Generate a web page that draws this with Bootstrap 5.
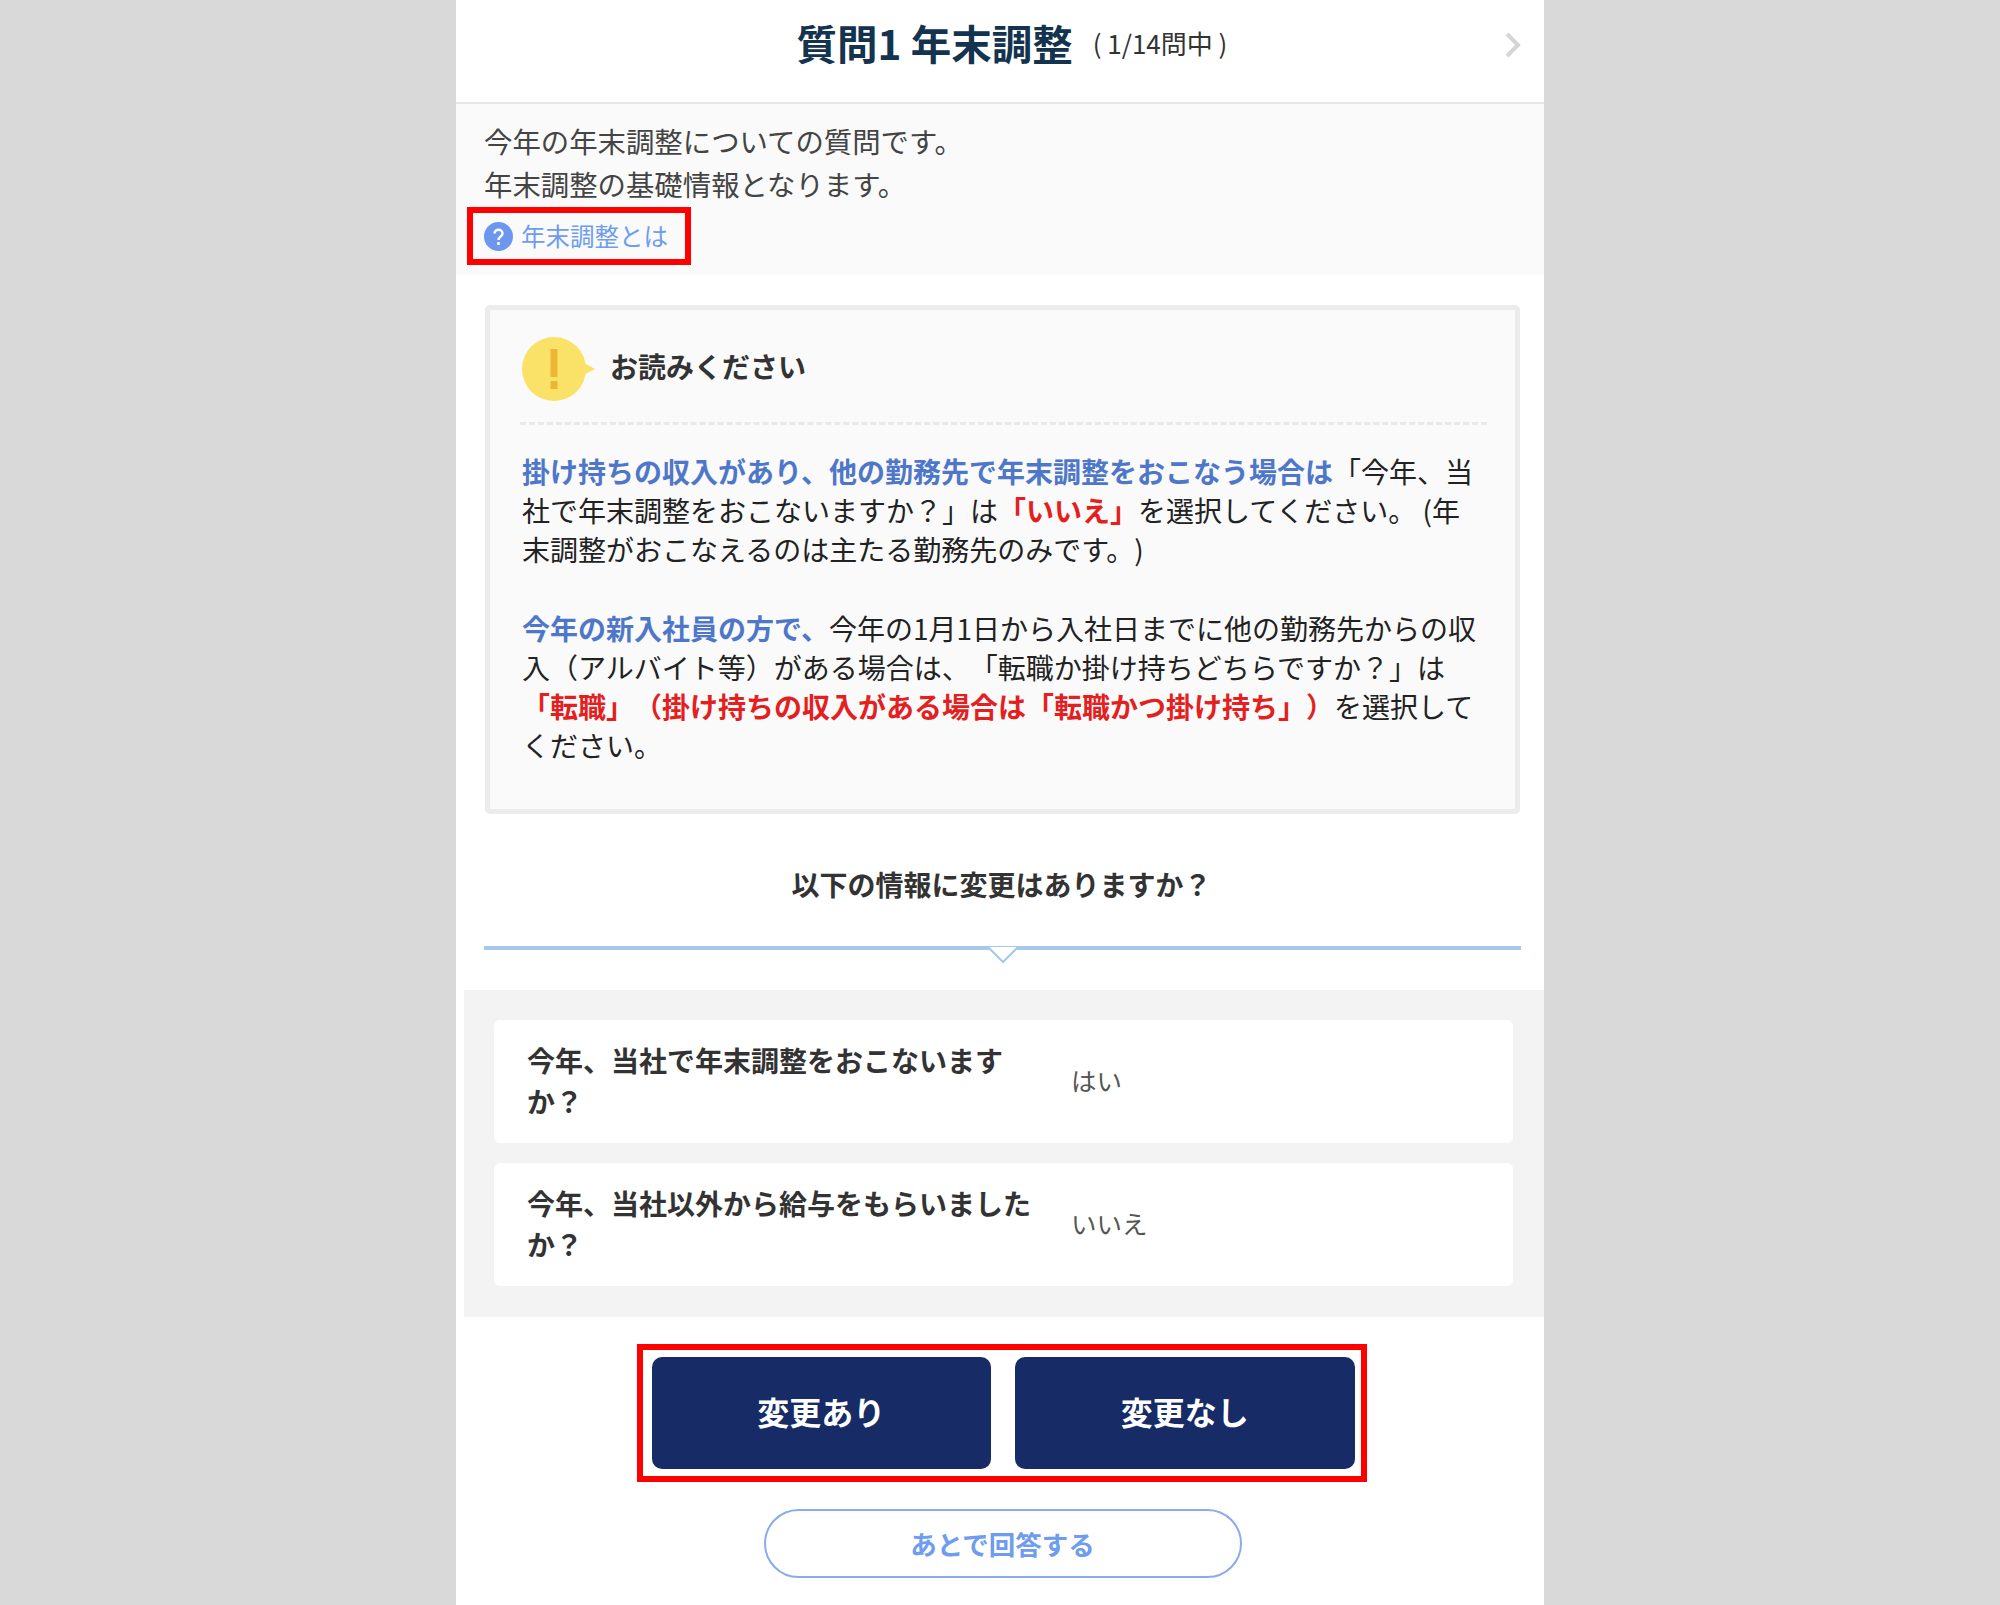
<!DOCTYPE html>
<html lang="ja">
<head>
  <meta charset="UTF-8">
  <title>質問1 年末調整</title>
  <link href="https://cdn.jsdelivr.net/npm/bootstrap@5.3.0/dist/css/bootstrap.min.css" rel="stylesheet">
  <style>
    html, body { height: 100%; }
    body {
      background: #d9d9d9;
      font-family: "Noto Sans CJK JP", "Liberation Sans", sans-serif;
      color: #333;
      overflow: hidden;
      text-spacing-trim: space-all;
    }
    .panel { width: 1088px; min-height: 1605px; background: #fff; }
    .head-bar { height: 104px; border-bottom: 2px solid #e6e6e6; position: relative; padding-left: 24px; }
    .head-title { font-size: 40.5px; font-weight: 700; color: #13334f; line-height: 1; }
    .head-count { font-size: 26px; color: #333; margin-left: 20px; line-height: 1; }
    .head-next { position: absolute; right: 22px; top: 31px; }
    .intro { background: #fafafa; height: 171px; padding: 15px 28px 0; font-size: 28.4px; line-height: 43px; color: #444; }
    .help-box { display: inline-flex; align-items: center; gap: 8px; border: 6px solid #f00; margin: 2px 0 0 -17px; padding: 0 17px 0 11px; height: 58px; font-size: 24.5px; color: #6d9cf0; line-height: 1; vertical-align: top; }
    .notice { margin: 30px 24px 0 29px; height: 509px; border: 5px solid #ececec; border-radius: 5px; background: #fafafa; padding: 21px 28px 0 32px; }
    .notice-head { height: 76px; gap: 14px; font-size: 28px; font-weight: 700; color: #333; }
    .notice-head span { margin-top: -6px; }
    .notice-rule { border-top: 3px dashed #e9e9e9; margin: 15px 0 27px -2px; }
    .notice-text { font-size: 28px; line-height: 39px; color: #222; margin: 0 0 40px; }
    .tx-blue { color: #4f77c9; font-weight: 700; }
    .tx-red { color: #e41f1f; font-weight: 700; }
    .ask { font-size: 28px; font-weight: 700; text-align: center; margin-top: 50px; line-height: 40px; color: #333; padding-left: 3px; }
    .ask-line { margin: 42px 23px 0 28px; height: 4px; background: #a3c9ef; position: relative; }
    .ask-line svg { position: absolute; left: 502px; top: 1px; }
    .answers { margin: 40px 0 0 8px; background: #f3f3f3; padding: 30px 31px 30px 30px; height: 327px; }
    .answer-row { background: #fff; border-radius: 6px; height: 123px; margin-bottom: 20px; padding: 0 33px 2px; }
    .answer-q { width: 530px; margin-right: 14px; font-size: 28px; font-weight: 700; line-height: 41px; color: #333; }
    .answer-a { font-size: 25.5px; color: #555; }
    .foot-btns { padding-left: 5px; }
    .btn-box { border: 6px solid #f00; width: 730px; height: 138px; margin: 27px auto 0; padding: 7px 6px 7px 9px; gap: 24px; transform: translateX(-1px); }
    .btn-navy { flex: 1; background: #172b66; color: #fff; font-size: 32px; font-weight: 700; border-radius: 10px; border: 0; padding-bottom: 10px; }
    .btn-navy:hover { background: #172b66; color: #fff; }
    .btn-later { width: 478px; height: 69px; margin-top: 27px; border: 2px solid #8aabee; border-radius: 35px; color: #6d9cf0; font-size: 26.5px; font-weight: 700; background: #fff; padding: 0; }
    .btn-later:hover { border-color: #8aabee; color: #6d9cf0; }
  </style>
</head>
<body>
  <div class="panel mx-auto">
    <!-- Header -->
    <div class="head-bar d-flex align-items-center justify-content-center pb-3">
      <span class="head-title">質問1 年末調整</span>
      <span class="head-count">( 1/14問中 )</span>
      <svg class="head-next" width="18" height="28" viewBox="0 0 18 28"><path d="M3 3 L14 14 L3 25" fill="none" stroke="#d5d5d5" stroke-width="4"/></svg>
    </div>

    <!-- Intro -->
    <div class="intro">
      <div>今年の年末調整についての質問です。</div>
      <div>年末調整の基礎情報となります。</div>
      <div class="help-box">
        <svg width="29" height="29" viewBox="0 0 29 29"><circle cx="14.5" cy="14.5" r="14.5" fill="#6d97ee"/><path d="M10.5 11.5 C10.5 6.5 18.5 6.5 18.5 11.5 C18.5 14.5 14.5 14.5 14.5 18" fill="none" stroke="#fff" stroke-width="2.4"/><rect x="13.2" y="20" width="2.6" height="3" fill="#fff"/></svg>
        <span>年末調整とは</span>
      </div>
    </div>

    <!-- Notice -->
    <div class="notice">
      <div class="notice-head d-flex align-items-center">
        <svg width="74" height="64" viewBox="0 0 74 64"><circle cx="32" cy="32" r="32" fill="#fae268"/><path d="M62 26 L73 32 L62 38 Z" fill="#fae268"/><rect x="28.5" y="12" width="7" height="28" fill="#edb534"/><rect x="28.5" y="44" width="7" height="8" fill="#edb534"/></svg>
        <span>お読みください</span>
      </div>
      <div class="notice-rule"></div>
      <p class="notice-text"><span class="tx-blue">掛け持ちの収入があり、他の勤務先で年末調整をおこなう場合は</span>「今年、当社で年末調整をおこないますか？」は<span class="tx-red">「いいえ」</span>を選択してください。 (年末調整がおこなえるのは主たる勤務先のみです。)</p>
      <p class="notice-text"><span class="tx-blue">今年の新入社員の方で、</span>今年の1月1日から入社日までに他の勤務先からの収入（アルバイト等）がある場合は、「転職か掛け持ちどちらですか？」は<br><span class="tx-red">「転職」（掛け持ちの収入がある場合は「転職かつ掛け持ち」）</span>を選択してください。</p>
    </div>

    <!-- Question -->
    <div class="ask">以下の情報に変更はありますか？</div>
    <div class="ask-line">
      <svg width="34" height="18" viewBox="0 0 34 18"><path d="M2 0 L17 15 L32 0" fill="#fff" stroke="#a3c9ef" stroke-width="2"/></svg>
    </div>

    <!-- Answers -->
    <div class="answers">
      <div class="answer-row d-flex align-items-center">
        <div class="answer-q">今年、当社で年末調整をおこないますか？</div>
        <div class="answer-a">はい</div>
      </div>
      <div class="answer-row d-flex align-items-center">
        <div class="answer-q">今年、当社以外から給与をもらいましたか？</div>
        <div class="answer-a">いいえ</div>
      </div>
    </div>

    <!-- Buttons -->
    <div class="foot-btns">
      <div class="btn-box d-flex">
        <button class="btn btn-navy">変更あり</button>
        <button class="btn btn-navy">変更なし</button>
      </div>
      <div class="text-center">
        <button class="btn btn-later">あとで回答する</button>
      </div>
    </div>
  </div>
  <script src="https://cdn.jsdelivr.net/npm/bootstrap@5.3.0/dist/js/bootstrap.bundle.min.js"></script>
</body>
</html>
